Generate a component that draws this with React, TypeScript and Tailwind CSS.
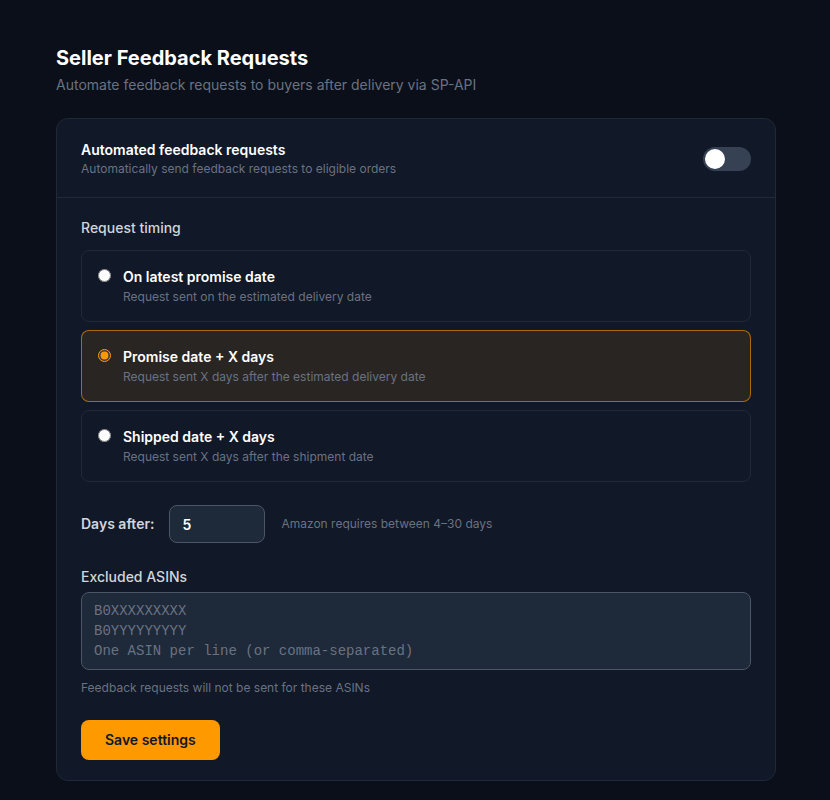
import React, { useState } from 'react';

type TimingKey = 'promise' | 'promisePlus' | 'shippedPlus';

const timingOptions: { key: TimingKey; title: string; desc: string }[] = [
  { key: 'promise', title: 'On latest promise date', desc: 'Request sent on the estimated delivery date' },
  { key: 'promisePlus', title: 'Promise date + X days', desc: 'Request sent X days after the estimated delivery date' },
  { key: 'shippedPlus', title: 'Shipped date + X days', desc: 'Request sent X days after the shipment date' },
];

export default function App() {
  const [enabled, setEnabled] = useState(false);
  const [timing, setTiming] = useState<TimingKey>('promisePlus');
  const [days, setDays] = useState('5');
  const [asins, setAsins] = useState('');

  return (
    <div className="min-h-screen bg-[#0b0f19] font-['Inter',sans-serif] text-white">
      <div className="w-[720px] ml-[56px] pt-[44px] pb-10">
        {/* Header */}
        <h1 className="text-xl font-bold text-white">Seller Feedback Requests</h1>
        <p className="mt-[3px] text-sm text-gray-500">
          Automate feedback requests to buyers after delivery via SP-API
        </p>

        {/* Settings card */}
        <div className="mt-[23px] bg-[#111827] border border-[#1f2937] rounded-xl">
          <div className="flex items-center justify-between px-6 pt-[21px] pb-5 border-b border-[#1f2937]">
            <div>
              <h3 className="text-sm font-semibold text-white">Automated feedback requests</h3>
              <p className="mt-px text-xs text-gray-500">Automatically send feedback requests to eligible orders</p>
            </div>
            <button
              onClick={() => setEnabled(!enabled)}
              className={`relative w-12 h-6 rounded-full transition-colors ${
                enabled ? 'bg-[#ff9900]' : 'bg-gray-700'
              }`}
            >
              <span
                className={`absolute top-0.5 left-0.5 w-5 h-5 rounded-full bg-white transition-transform ${
                  enabled ? 'translate-x-6' : 'translate-x-0'
                }`}
              />
            </button>
          </div>

          <div className="px-6 pt-5 pb-5">
            <label className="block text-sm font-medium text-gray-300 mb-3">Request timing</label>
            <div className="space-y-2">
              {timingOptions.map((opt) => {
                const active = timing === opt.key;
                return (
                  <label
                    key={opt.key}
                    className={`flex items-start gap-3 px-4 py-4 rounded-lg border cursor-pointer transition-colors ${
                      active
                        ? 'bg-[#ff9900]/10 border-[#ff9900]/60'
                        : 'border-[#1f2937] hover:border-gray-600'
                    }`}
                  >
                    <input
                      type="radio"
                      name="timing"
                      checked={active}
                      onChange={() => setTiming(opt.key)}
                      className="m-0 mt-0.5 w-[13px] h-[13px] accent-[#ff9900] shrink-0"
                    />
                    <div>
                      <div className="text-sm font-semibold text-white">{opt.title}</div>
                      <div className="mt-0.5 text-xs text-gray-500">{opt.desc}</div>
                    </div>
                  </label>
                );
              })}
            </div>

            {/* Days after */}
            <div className="mt-[23px] flex items-center gap-[15px]">
              <label className="text-sm font-semibold text-gray-300">Days after:</label>
              <input
                type="number"
                value={days}
                onChange={(e) => setDays(e.target.value)}
                className="w-24 h-[38px] px-3 bg-gray-800 border border-gray-600 rounded-lg text-sm font-semibold text-white outline-none [appearance:textfield] [&::-webkit-inner-spin-button]:appearance-none"
              />
              <span className="ml-px text-xs text-gray-500">Amazon requires between 4–30 days</span>
            </div>

            {/* Excluded ASINs */}
            <div className="mt-6">
              <label className="block text-sm font-medium text-gray-300 mb-[5px]">Excluded ASINs</label>
              <textarea
                rows={3}
                value={asins}
                onChange={(e) => setAsins(e.target.value)}
                placeholder={'B0XXXXXXXXX\nB0YYYYYYYYY\nOne ASIN per line (or comma-separated)'}
                className="block w-full px-3 py-2 bg-gray-800 border border-gray-600 rounded-lg text-sm leading-5 font-mono text-white placeholder:text-gray-500 resize-none outline-none"
              />
              <p className="mt-2.5 text-xs text-gray-500">Feedback requests will not be sent for these ASINs</p>
            </div>

            <button className="mt-6 px-6 py-2.5 bg-[#ff9900] hover:bg-[#e68a00] rounded-lg text-sm font-semibold text-gray-900 transition-colors">
              Save settings
            </button>
          </div>
        </div>
      </div>
    </div>
  );
}
